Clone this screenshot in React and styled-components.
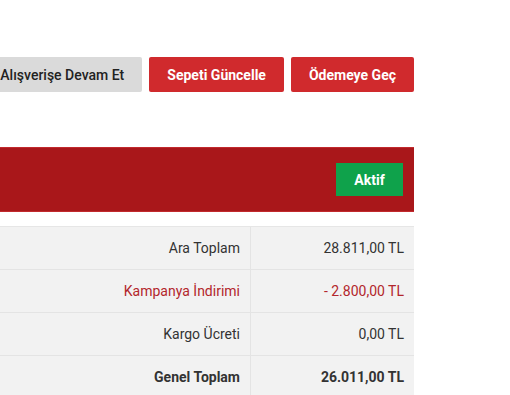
import styled, { createGlobalStyle } from 'styled-components';

const GlobalStyle = createGlobalStyle`
  html, body {
    margin: 0;
    padding: 0;
    background: #fff;
    overflow: hidden;
  }
  body {
    font-family: Roboto, "Liberation Sans", Arial, sans-serif;
  }
`;

const rows = [
  { label: 'Ara Toplam', value: '28.811,00 TL' },
  { label: 'Kampanya İndirimi', value: '- 2.800,00 TL', tone: 'red' },
  { label: 'Kargo Ücreti', value: '0,00 TL' },
  { label: 'Genel Toplam', value: '26.011,00 TL', bold: true },
];

function App() {
  return (
    <>
      <GlobalStyle />
      <StyledPage>
        <StyledActions>
          <StyledButton variant="gray">Alışverişe Devam Et</StyledButton>
          <StyledButton>Sepeti Güncelle</StyledButton>
          <StyledButton>Ödemeye Geç</StyledButton>
        </StyledActions>
        <StyledBanner>
          <StyledActive>Aktif</StyledActive>
        </StyledBanner>
        <StyledTable>
          {rows.map((row) => (
            <StyledRow key={row.label}>
              <StyledCell tone={row.tone} bold={row.bold}>
                {row.label}
              </StyledCell>
              <StyledCell tone={row.tone} bold={row.bold}>
                {row.value}
              </StyledCell>
            </StyledRow>
          ))}
        </StyledTable>
      </StyledPage>
    </>
  );
}

export default App;

const StyledPage = styled.div`
  width: 414px;
  padding-top: 57px;
`;

const StyledActions = styled.div`
  display: flex;
  justify-content: flex-end;
  gap: 7px;
`;

const StyledButton = styled.button`
  flex-shrink: 0;
  height: 35px;
  padding: 0 18px;
  border: none;
  border-radius: 2px;
  font-family: Roboto, "Liberation Sans", Arial, sans-serif;
  font-size: 14px;
  font-weight: ${(props) => (props.variant === 'gray' ? 500 : 700)};
  background: ${(props) => (props.variant === 'gray' ? '#dadada' : '#d02a2d')};
  color: ${(props) => (props.variant === 'gray' ? '#222' : '#fff')};
  cursor: pointer;
`;

const StyledBanner = styled.div`
  margin-top: 55px;
  height: 63px;
  display: flex;
  align-items: center;
  justify-content: flex-end;
  padding-right: 11px;
  background: #a9171a;
  border-top: 1px solid #c22a2d;
  border-bottom: 1px solid #c22a2d;
`;

const StyledActive = styled.div`
  width: 67px;
  height: 33px;
  display: flex;
  align-items: center;
  justify-content: center;
  background: #0fa24b;
  color: #fff;
  font-size: 14px;
  font-weight: 700;
`;

const StyledTable = styled.div`
  margin-top: 14px;
  border-top: 1px solid #e6e6e6;
`;

const StyledRow = styled.div`
  display: grid;
  grid-template-columns: 250px 1fr;
  height: 43px;
  background: #f2f2f2;
  border-bottom: 1px solid #e4e4e4;
  box-sizing: border-box;
`;

const StyledCell = styled.div`
  display: flex;
  align-items: center;
  justify-content: flex-end;
  padding-right: 10px;
  font-size: 14px;
  font-weight: ${(props) => (props.bold ? 700 : 400)};
  color: ${(props) => (props.tone === 'red' ? '#b3262c' : '#333')};

  & + & {
    border-left: 1px solid #e4e4e4;
  }
`;
